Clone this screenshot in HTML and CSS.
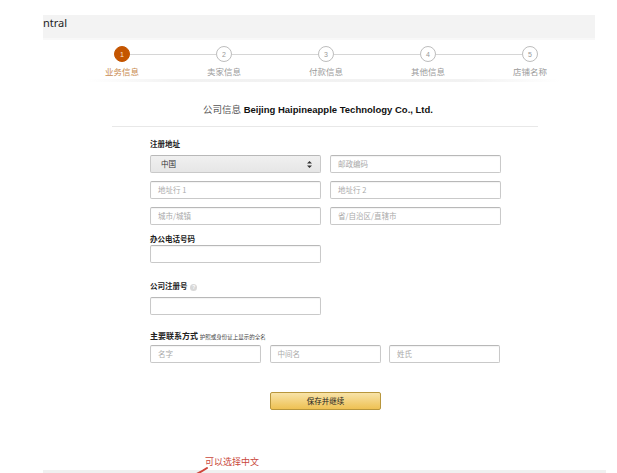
FILE: index.html
```html
<!DOCTYPE html>
<html lang="zh">
<head>
<meta charset="utf-8">
<title>公司信息</title>
<link rel="stylesheet" href="styles.css">
</head>
<body>
<div class="page">
  <div class="topbar">ntral</div>

  <div class="steps">
    <span class="circle active">1</span><span class="conn"></span>
    <span class="circle">2</span><span class="conn"></span>
    <span class="circle">3</span><span class="conn"></span>
    <span class="circle">4</span><span class="conn"></span>
    <span class="circle">5</span>
  </div>
  <div class="step-labels">
    <span class="active">业务信息</span>
    <span>卖家信息</span>
    <span>付款信息</span>
    <span>其他信息</span>
    <span>店铺名称</span>
  </div>
  <div class="shade"></div>

  <div class="title"><span class="title-cn">公司信息</span> <b>Beijing Haipineapple Technology Co., Ltd.</b></div>
  <div class="sep"></div>

  <div class="form">
    <div class="label l-addr">注册地址</div>
    <div class="grid2">
      <div class="select"><span>中国</span>
        <svg class="arrows" width="5" height="7" viewBox="0 0 5 7"><path d="M2.5 0 L5 2.6 L0 2.6 Z M2.5 7 L5 4.4 L0 4.4 Z" fill="#333"/></svg>
      </div>
      <div class="field ph">邮政编码</div>
      <div class="field ph">地址行 1</div>
      <div class="field ph">地址行 2</div>
      <div class="field ph">城市/城镇</div>
      <div class="field ph">省/自治区/直辖市</div>
    </div>

    <div class="label l-phone">办公电话号码</div>
    <div class="field half f-phone"></div>

    <div class="label l-reg">公司注册号 <span class="help">?</span></div>
    <div class="field half f-reg"></div>

    <div class="label l-contact">主要联系方式 <span class="hint">护照或身份证上显示的全名</span></div>
    <div class="grid3">
      <div class="field ph">名字</div>
      <div class="field ph">中间名</div>
      <div class="field ph">姓氏</div>
    </div>

    <div class="btn-row"><span class="btn">保存并继续</span></div>
  </div>

  <div class="note">可以选择中文
    <svg class="arrow" width="60" height="24" viewBox="0 0 60 24"><path d="M6 22 Q22 17 34 9" stroke="#d0453a" stroke-width="2" fill="none" stroke-linecap="round"/></svg>
  </div>
  <div class="bottombar"></div>
</div>
</body>
</html>
```

FILE: styles.css
```css
html, body {
  margin: 0;
  padding: 0;
  background: #fff;
}
body {
  width: 617px;
  height: 473px;
  overflow: hidden;
  font-family: "Liberation Sans", "Noto Sans CJK SC", sans-serif;
  color: #333;
}
.page {
  width: 617px;
}
.topbar {
  margin: 15px 0 0 43px;
  width: 552px;
  height: 23px;
  background: #f3f3f3;
  border-bottom: 2px solid #f8f8f8;
  font-family: "Noto Sans", "Open Sans", sans-serif;
  font-size: 11px;
  line-height: 15px;
  color: #222;
}
.steps {
  display: flex;
  align-items: center;
  margin-top: 6px;
  padding-left: 114px;
  height: 16px;
}
.circle {
  box-sizing: border-box;
  width: 16px;
  height: 16px;
  border-radius: 50%;
  border: 1px solid #bdbdbd;
  background: #fff;
  color: #999;
  font-size: 7px;
  display: flex;
  align-items: center;
  justify-content: center;
  flex: none;
}
.circle.active {
  background: #c45500;
  border-color: #c45500;
  color: #fbe3cf;
}
.conn {
  width: 86px;
  height: 1px;
  background: #d6d6d6;
  flex: none;
}
.step-labels {
  display: grid;
  grid-template-columns: repeat(5, 102px);
  margin: 4px 0 0 71px;
  font-family: "Noto Sans CJK SC", sans-serif;
  font-size: 8.5px;
  line-height: 10px;
  text-align: center;
  color: #9a9a9a;
}
.step-labels .active {
  color: #c98b4f;
}
.shade {
  margin: 3px 0 0 85px;
  width: 475px;
  height: 3px;
  background: linear-gradient(to right, rgba(236,236,236,0), #ececec 20%, #ececec 80%, rgba(236,236,236,0));
  opacity: 0.7;
}
.title {
  margin-top: 20px;
  padding-left: 203px;
  font-size: 9.5px;
  line-height: 14px;
  color: #111;
  white-space: nowrap;
}
.title-cn {
  font-family: "Noto Sans CJK SC", sans-serif;
  color: #555;
  font-weight: 400;
}
.title b {
  font-weight: 700;
}
.sep {
  margin: 9px 0 0 112px;
  width: 426px;
  height: 1px;
  background: #e8e8e8;
}
.form {
  margin-left: 150px;
  width: 350px;
}
.label {
  font-family: "Noto Sans CJK SC", sans-serif;
  font-weight: 700;
  font-size: 7.5px;
  line-height: 10px;
  color: #222;
  white-space: nowrap;
}
.l-addr { margin-top: 12px; }
.l-phone { margin-top: 9px; }
.l-reg { margin-top: 18px; }
.l-contact { margin-top: 16px; font-size: 8px; }
.hint {
  font-weight: 400;
  font-size: 5.5px;
  color: #444;
}
.help {
  display: inline-flex;
  align-items: center;
  justify-content: center;
  width: 7px;
  height: 7px;
  border-radius: 50%;
  background: #d8d8d8;
  color: #fff;
  font-family: "Liberation Sans", sans-serif;
  font-size: 5px;
  font-weight: 700;
  vertical-align: 0;
  margin-left: 1px;
}
.grid2 {
  display: grid;
  grid-template-columns: 171px 171px;
  column-gap: 9px;
  row-gap: 8px;
  margin-top: 6px;
}
.grid3 {
  display: grid;
  grid-template-columns: 111px 111px 111px;
  column-gap: 8.5px;
  margin-top: 3px;
}
.field, .select {
  box-sizing: border-box;
  height: 18px;
  border: 1px solid #c9c9c9;
  border-top-color: #b8b8b8;
  border-radius: 2px;
  background: #fff;
  box-shadow: inset 0 1px 1px rgba(0,0,0,0.05);
  font-family: "Noto Sans CJK SC", sans-serif;
  font-size: 7.5px;
  line-height: 16px;
  padding: 0 7px;
  color: #aaa;
  white-space: nowrap;
}
.select {
  display: flex;
  align-items: center;
  justify-content: space-between;
  background: linear-gradient(#f0f0f0, #e6e6e6);
  color: #333;
  padding: 0 8px 0 10px;
  box-shadow: none;
}
.arrows {
  display: block;
}
.half {
  width: 171px;
}
.f-phone { margin-top: 1px; }
.f-reg { margin-top: 6px; }
.btn-row {
  display: flex;
  justify-content: center;
  margin-top: 29px;
  padding-left: 1px;
}
.btn {
  box-sizing: border-box;
  width: 111px;
  height: 18px;
  border: 1px solid #b8963c;
  border-radius: 2px;
  background: linear-gradient(#f8e3a8, #eec153);
  font-family: "Noto Sans CJK SC", sans-serif;
  font-size: 7.5px;
  line-height: 16px;
  text-align: center;
  color: #222;
}
.note {
  position: relative;
  margin: 47px 0 0 205px;
  width: 80px;
  font-family: "Noto Sans CJK SC", sans-serif;
  font-size: 9px;
  line-height: 10px;
  color: #c9473c;
}
.arrow {
  position: absolute;
  left: -32px;
  top: 2px;
  z-index: 2;
}
.bottombar {
  margin: 3px 0 0 43px;
  width: 563px;
  height: 10px;
  background: #f0f0f0;
}
```
